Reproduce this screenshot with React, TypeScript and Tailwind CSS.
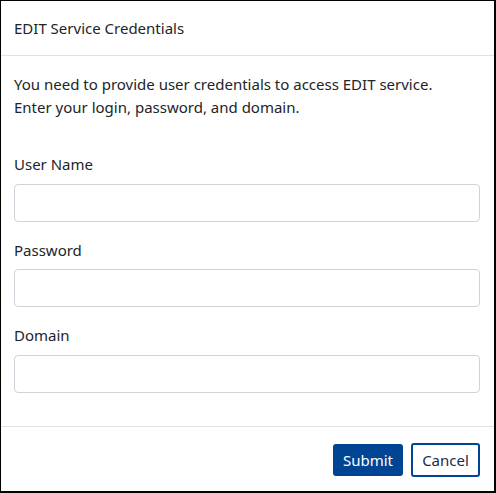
import React from 'react'

const fieldNames = ['User Name', 'Password', 'Domain']

export default function App() {
  return (
    <div
      className="w-[496px] h-[493px] bg-white border-t border-l border-r-2 border-b-2 border-black flex flex-col text-[#212529] text-[15px] leading-[22.5px]"
      style={{ fontFamily: '"Segoe UI", "Noto Sans", sans-serif' }}
    >
      {/* Header */}
      <div className="h-[55px] flex items-center px-[13px] border-b border-[#dee2e6] shrink-0">
        <span>EDIT Service Credentials</span>
      </div>

      {/* Body */}
      <div className="flex-1 px-[13px] pt-[17px]">
        <p>
          You need to provide user credentials to access EDIT service.
          <br />
          Enter your login, password, and domain.
        </p>
        <div className="mt-[35px] flex flex-col gap-[17px]">
          {fieldNames.map((name) => (
            <div key={name} className="flex flex-col">
              <label className="mb-[8px]">{name}</label>
              <input
                type={name === 'Password' ? 'password' : 'text'}
                className="h-[38px] w-[466px] border border-[#ced4da] rounded-[4px] px-3 outline-none"
              />
            </div>
          ))}
        </div>
      </div>

      {/* Footer */}
      <div className="h-[65px] border-t border-[#dee2e6] shrink-0 flex items-start justify-end gap-[8px] pr-[14px] pt-[16px]">
        <button className="mt-[1px] h-[32px] w-[70px] bg-[#004494] text-white rounded-[3px]">
          Submit
        </button>
        <button className="h-[34px] w-[69px] border-2 border-[#004494] text-[#1c2a4a] rounded-[3px]">
          Cancel
        </button>
      </div>
    </div>
  )
}
